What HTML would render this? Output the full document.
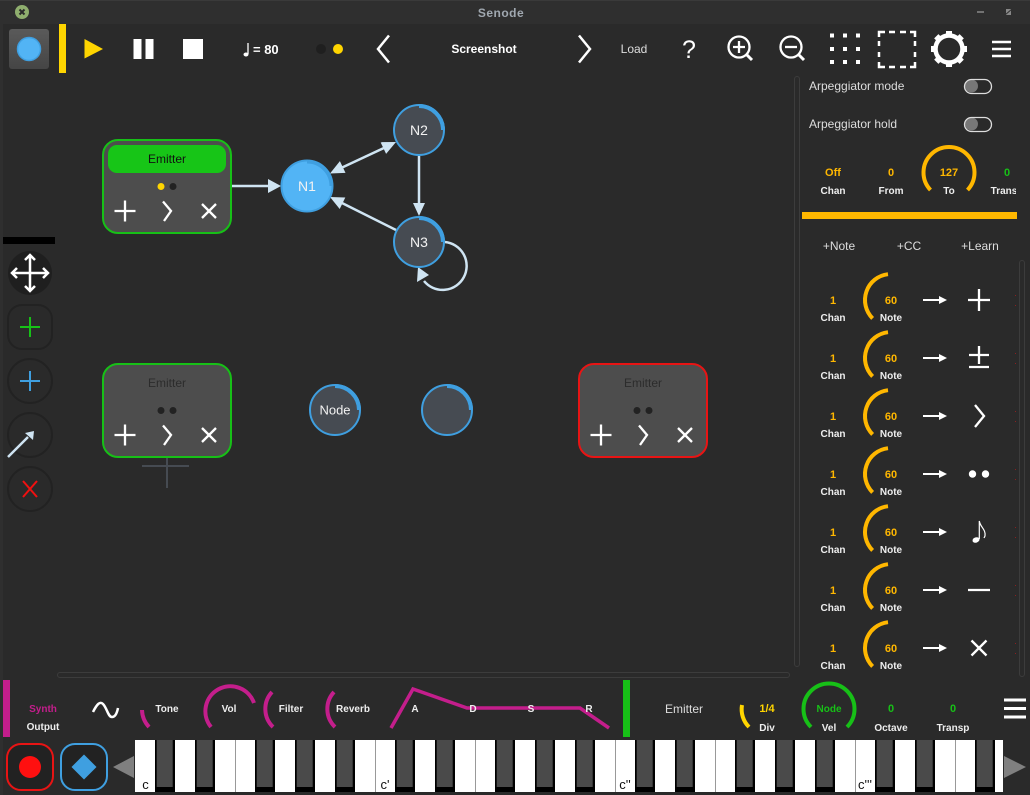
<!DOCTYPE html>
<html><head><meta charset="utf-8"><style>
html,body{margin:0;padding:0;background:#2a2a2a;width:1030px;height:795px;overflow:hidden}
svg{display:block;font-family:"Liberation Sans",sans-serif}
.b{font-weight:bold;font-size:10px;text-anchor:middle;fill:#eee}
.v{font-size:11px}
.y{fill:#ffb700}.g{fill:#17c017}.m{fill:#c41e8c}
.t{font-size:12px;fill:#ddd;text-anchor:middle}
.w{stroke:#fff;stroke-width:2.300;fill:none}
.w2{stroke:#fff;stroke-width:2.500;fill:none}
.e{font-size:12px;text-anchor:middle;fill:#2c2c2c}
.n{font-size:14px;fill:#f2f2f2;text-anchor:middle}
.l{stroke:#cfe4f2;stroke-width:2.500;fill:none}
.h{fill:#cfe4f2}
.ar{stroke:#ffb700;stroke-width:4;fill:none}
.mg{stroke:#c41e8c;stroke-width:4;fill:none}
</style></head><body>
<svg width="1030" height="795" viewBox="0 0 1030 795" xmlns="http://www.w3.org/2000/svg">
<defs>
<linearGradient id="bt" x1="0" y1="0" x2="0" y2="1"><stop offset="0" stop-color="#5a5a5a"/><stop offset="1" stop-color="#454545"/></linearGradient>
<g id="ctl"><path class="w" d="M-10.500 0H10.500M0-10.500V10.500"/><path class="w" d="M38-9.500L46 0L39 10"/><path class="w" d="M77-7L91 7M91-7L77 7"/></g>
<g id="rw"><path class="ar" d="M-3-25.800A26 26 0 0 0-18.400 18.400"/><path stroke="#fff" stroke-width="2" d="M32 0H50"/><path fill="#fff" d="M48-4L56 0L48 4Z"/><rect x="124" y="-5" width="1" height="1" fill="#8c2020"/><rect x="124" y="5" width="1" height="1" fill="#8c2020"/></g>
<g id="bk"><rect width="20" height="52" fill="#000"/><rect x="1.700" width="16" height="47" fill="#4a4a4a"/></g>
<g id="oct"><use href="#bk" x="20"/><use href="#bk" x="60"/><use href="#bk" x="120"/><use href="#bk" x="160"/><use href="#bk" x="200"/><rect x="100" width="1" height="52" fill="#999"/></g>
<g id="gt"><rect x="-3" y="-18" width="6" height="6" fill="#fff"/></g>
</defs>
<rect width="1030" height="795" fill="#2a2a2a"/>
<rect width="1030" height="24" fill="#2f2f2f"/>
<rect width="1030" height="1" fill="#3a3a3a"/>
<rect x="0" y="24" width="3" height="771" fill="#2f2f2f"/>
<circle cx="22" cy="12" r="7" fill="#8fae6e"/><path stroke="#2a2a2a" stroke-width="2" d="M19.500 9.500L24.500 14.500M24.500 9.500L19.500 14.500"/>
<text x="501" y="17" font-size="12" font-weight="bold" fill="#a0a8b0" text-anchor="middle" letter-spacing=".5">Senode</text>
<path stroke="#888" stroke-width="1.500" d="M977 12H984"/><path fill="#888" d="M1006 9L1011 9L1011 15L1006 15Z"/><path stroke="#2f2f2f" d="M1005 15L1012 9"/>

<rect x="9" y="29" width="40" height="40" rx="3" fill="url(#bt)"/>
<circle cx="29" cy="49" r="11.500" fill="#52b4f5" stroke="#3f9fe0" stroke-width="1.500"/>
<rect x="59" y="24" width="7" height="49" fill="#ffd500"/>
<path fill="#ffd500" d="M84.500 39L103 49L84.500 58.500Z"/>
<rect x="133.500" y="39" width="8" height="20" fill="#fff"/><rect x="145.500" y="39" width="8" height="20" fill="#fff"/>
<rect x="183" y="39" width="20" height="20" fill="#fff"/>
<path stroke="#fff" stroke-width="1.300" d="M248 43V54"/><ellipse cx="246" cy="54.500" rx="2.500" ry="2" fill="#fff"/>
<text x="253" y="54" font-size="13" font-weight="bold" fill="#fff">= 80</text>
<circle cx="321" cy="49" r="5" fill="#1f1f1f"/><circle cx="338" cy="49" r="5" fill="#ffd500"/>
<path class="w2" d="M389 35.500L378 49L389 62.500"/>
<text x="484" y="53" font-size="12" font-weight="bold" fill="#fff" text-anchor="middle">Screenshot</text>
<path class="w2" d="M579 35.500L590 49L579 62.500"/>
<text x="634" y="53" class="t">Load</text>
<text x="689" y="58" font-size="25" fill="#fff" text-anchor="middle">?</text>
<circle cx="739" cy="47" r="10.500" class="w"/><path class="w" d="M733 47H745M739 41V53"/><path class="w2" style="stroke-width:3" d="M747 55L752 60"/>
<circle cx="791" cy="47" r="10.500" class="w"/><path class="w" d="M785 47H797"/><path class="w2" style="stroke-width:3" d="M799 55L804 60"/>
<g fill="#fff"><rect x="830" y="33.500" width="4" height="4"/><rect x="843" y="33.500" width="4" height="4"/><rect x="856" y="33.500" width="4" height="4"/><rect x="830" y="47" width="4" height="4"/><rect x="843" y="47" width="4" height="4"/><rect x="856" y="47" width="4" height="4"/><rect x="830" y="60" width="4" height="4"/><rect x="843" y="60" width="4" height="4"/><rect x="856" y="60" width="4" height="4"/></g>
<path class="w2" d="M879 37V32H885M889 32H895M900 32H906M910 32H915V37M915 41V46M915 52V57M915 62V67H910M906 67H900M895 67H889M885 67H879V62M879 57V52M879 46V41"/>
<g transform="translate(949 49)"><circle r="13.500" fill="none" stroke="#fff" stroke-width="4.500"/>
<use href="#gt"/><use href="#gt" transform="rotate(45)"/><use href="#gt" transform="rotate(90)"/><use href="#gt" transform="rotate(135)"/><use href="#gt" transform="rotate(180)"/><use href="#gt" transform="rotate(225)"/><use href="#gt" transform="rotate(270)"/><use href="#gt" transform="rotate(315)"/></g>
<path class="w2" d="M992 42H1011M992 49H1011M992 56H1011"/>

<!-- graph -->
<rect x="103" y="140" width="128" height="93" rx="15" fill="#4d4d4d" stroke="#17c017" stroke-width="2"/>
<rect x="108" y="145" width="118" height="28" rx="9" fill="#17c517"/>
<text x="167" y="163" class="e" style="fill:#111">Emitter</text>
<circle cx="161" cy="186.500" r="3.500" fill="#ffd500"/><circle cx="173" cy="186.500" r="3.500" fill="#222"/>
<use href="#ctl" x="125" y="211"/>

<path class="l" d="M232 186H270"/><path class="h" d="M268 179L281 186L268 193Z"/>
<path class="l" d="M340 168.500L386 147"/><path class="h" d="M330 173.500L345.500 172.900L339.900 161.100Z"/><path class="h" d="M396 142L380.500 142.100L386.100 153.900Z"/>
<path class="l" d="M419 156V205"/><path class="h" d="M413 203H425L419 216Z"/>
<path class="l" d="M396 230L340 202"/><path class="h" d="M330 197L345.300 197.500L339.700 209Z"/>
<path class="l" d="M445 242A24 24 0 1 1 424 281"/><path class="h" d="M418 267L429 275L417 282Z"/>

<circle cx="307" cy="186" r="25.500" fill="#52b4f5" stroke="#3f9fe0" stroke-width="2"/>
<path d="M307 162A24 24 0 0 1 331 186" stroke="#3f9fe0" stroke-width="3" fill="none"/>
<text x="307" y="191" class="n">N1</text>
<circle cx="419" cy="130" r="25" fill="#464b52" stroke="#3f9fe0" stroke-width="2"/>
<path d="M419 106A24 24 0 0 1 443 130" stroke="#3f9fe0" stroke-width="4" fill="none"/>
<text x="419" y="135" class="n">N2</text>
<circle cx="419" cy="242" r="25" fill="#464b52" stroke="#3f9fe0" stroke-width="2"/>
<path d="M419 218A24 24 0 0 1 443 242" stroke="#3f9fe0" stroke-width="4" fill="none"/>
<text x="419" y="247" class="n">N3</text>

<!-- left tools -->
<rect x="3" y="237" width="52" height="7" fill="#000"/>
<circle cx="30" cy="273" r="22" fill="#1f1f1f"/>
<path class="w2" d="M30 255V291M12 273H48M25 260L30 255L35 260M25 286L30 291L35 286M17 268L12 273L17 278M43 268L48 273L43 278"/>
<rect x="8" y="305" width="44" height="44" rx="14" fill="none" stroke="#222" stroke-width="2"/>
<path stroke="#17c017" stroke-width="2" d="M20 327H40M30 317V337"/>
<circle cx="30" cy="381" r="22" fill="none" stroke="#222" stroke-width="2"/>
<path stroke="#3f9fe0" stroke-width="2" d="M20 381H40M30 371V391"/>
<circle cx="30" cy="435" r="22" fill="none" stroke="#222" stroke-width="2"/>
<path class="l" d="M8 457L28 437"/><path class="h" d="M34 431L25 433L33 440Z"/>
<circle cx="30" cy="489" r="22" fill="none" stroke="#222" stroke-width="2"/>
<path stroke="#f01010" stroke-width="2" d="M23 481L37 497M37 481L23 497"/>

<rect x="103" y="364" width="128" height="93" rx="15" fill="#4d4d4d" stroke="#17c017" stroke-width="2"/>
<text x="167" y="387" class="e">Emitter</text>
<circle cx="161" cy="410.500" r="3.500" fill="#222"/><circle cx="173" cy="410.500" r="3.500" fill="#222"/>
<use href="#ctl" x="125" y="435"/>
<path stroke="#464b52" stroke-width="2" d="M142 466H189M167 458V488"/>

<circle cx="335" cy="410" r="25" fill="#464b52" stroke="#3f9fe0" stroke-width="2"/>
<path d="M335 386A24 24 0 0 1 359 410" stroke="#3f9fe0" stroke-width="4" fill="none"/>
<text x="335" y="414.500" class="n" style="font-size:13px">Node</text>
<circle cx="447" cy="410" r="25" fill="#464b52" stroke="#3f9fe0" stroke-width="2"/>
<path d="M447 386A24 24 0 0 1 471 410" stroke="#3f9fe0" stroke-width="4" fill="none"/>

<rect x="579" y="364" width="128" height="93" rx="15" fill="#4d4d4d" stroke="#e81414" stroke-width="2"/>
<text x="643" y="387" class="e">Emitter</text>
<circle cx="637" cy="410.500" r="3.500" fill="#222"/><circle cx="649" cy="410.500" r="3.500" fill="#222"/>
<use href="#ctl" x="601" y="435"/>

<!-- scrollbars -->
<rect x="794.500" y="76.500" width="5" height="590" rx="2.500" fill="none" stroke="#3c3c3c"/>
<rect x="1019.500" y="260.500" width="5" height="416" rx="2.500" fill="none" stroke="#3c3c3c"/>
<rect x="57.500" y="672.500" width="732" height="5" rx="2.500" fill="none" stroke="#3c3c3c"/>

<!-- right panel -->
<text x="809" y="90" font-size="12" fill="#ddd">Arpeggiator mode</text>
<circle cx="971.500" cy="86" r="6.500" fill="#777"/><rect x="964.500" y="79.500" width="27" height="14" rx="7" fill="none" stroke="#ddd" stroke-width="1.300"/>
<text x="809" y="128" font-size="12" fill="#ddd">Arpeggiator hold</text>
<circle cx="971.500" cy="124" r="6.500" fill="#777"/><rect x="964.500" y="117.500" width="27" height="14" rx="7" fill="none" stroke="#ddd" stroke-width="1.300"/>

<text x="833" y="176" class="b v y">Off</text><text x="833" y="194" class="b">Chan</text>
<text x="891" y="176" class="b v y">0</text><text x="891" y="194" class="b">From</text>
<path class="ar" d="M930.500 190A25.500 25.500 0 1 1 967.500 190"/>
<text x="949" y="176" class="b v y">127</text><text x="949" y="194" class="b">To</text>
<text x="1007" y="176" class="b v g">0</text>
<svg x="985" y="180" width="31" height="20"><text x="19" y="14" class="b">Trans</text></svg>
<rect x="802" y="212" width="215" height="7" fill="#ffb700"/>
<text x="839" y="250" class="t">+Note</text><text x="909" y="250" class="t">+CC</text><text x="980" y="250" class="t">+Learn</text>

<use href="#rw" x="891" y="300"/><text x="833" y="304" class="b v y">1</text><text x="833" y="321" class="b">Chan</text><text x="891" y="304" class="b v y">60</text><text x="891" y="321" class="b">Note</text>
<path class="w" d="M968 300H990M979 289V311"/>
<use href="#rw" x="891" y="358"/><text x="833" y="362" class="b v y">1</text><text x="833" y="379" class="b">Chan</text><text x="891" y="362" class="b v y">60</text><text x="891" y="379" class="b">Note</text>
<path class="w" d="M969 355H989M979 346V364M969 367H989"/>
<use href="#rw" x="891" y="416"/><text x="833" y="420" class="b v y">1</text><text x="833" y="437" class="b">Chan</text><text x="891" y="420" class="b v y">60</text><text x="891" y="437" class="b">Note</text>
<path class="w" d="M975 405L984 416L975 427"/>
<use href="#rw" x="891" y="474"/><text x="833" y="478" class="b v y">1</text><text x="833" y="495" class="b">Chan</text><text x="891" y="478" class="b v y">60</text><text x="891" y="495" class="b">Note</text>
<circle cx="972.500" cy="474" r="3.700" fill="#fff"/><circle cx="985.500" cy="474" r="3.700" fill="#fff"/>
<use href="#rw" x="891" y="532"/><text x="833" y="536" class="b v y">1</text><text x="833" y="553" class="b">Chan</text><text x="891" y="536" class="b v y">60</text><text x="891" y="553" class="b">Note</text>
<ellipse cx="976" cy="540" rx="3.600" ry="2.600" fill="#fff" transform="rotate(-20 976 540)"/><path stroke="#fff" stroke-width="1.200" fill="none" d="M979.300 539V521C980 527 986 529 985 536L984 538"/>
<use href="#rw" x="891" y="590"/><text x="833" y="594" class="b v y">1</text><text x="833" y="611" class="b">Chan</text><text x="891" y="594" class="b v y">60</text><text x="891" y="611" class="b">Note</text>
<path class="w" d="M968 590H990"/>
<use href="#rw" x="891" y="648"/><text x="833" y="652" class="b v y">1</text><text x="833" y="669" class="b">Chan</text><text x="891" y="652" class="b v y">60</text><text x="891" y="669" class="b">Note</text>
<path class="w" d="M971.500 640.500L986.500 655.500M986.500 640.500L971.500 655.500"/>

<!-- bottom -->
<rect x="3" y="680" width="7" height="57" fill="#c41e8c"/>
<text x="43" y="712" class="b m">Synth</text><text x="43" y="730" class="b">Output</text>
<path class="w2" d="M93 712C97 704 100 701 103 704C107 708 108 717 112 717C115 717 117 713 118 708"/>
<path class="mg" d="M142 710A26 26 0 0 0 149 727"/><text x="167" y="712" class="b">Tone</text>
<path class="mg" d="M211 727A25 25 0 1 1 254 703"/><text x="229" y="712" class="b">Vol</text>
<path class="mg" d="M272 692A25 25 0 0 0 273 727"/><text x="291" y="712" class="b">Filter</text>
<path class="mg" d="M334 692A25 25 0 0 0 335 727"/><text x="353" y="712" class="b">Reverb</text>
<path stroke="#c41e8c" stroke-width="3.500" fill="none" d="M391 728L413 689L467 708H580L609 728"/>
<text x="415" y="712" class="b">A</text><text x="473" y="712" class="b">D</text><text x="531" y="712" class="b">S</text><text x="589" y="712" class="b">R</text>
<rect x="623" y="680" width="7" height="57" fill="#17c017"/>
<text x="684" y="713" class="t">Emitter</text>
<path stroke="#ffd500" stroke-width="4" fill="none" d="M742 705A25 25 0 0 0 749 727"/>
<text x="767" y="712" class="b v" style="fill:#ffd500">1/4</text><text x="767" y="731" class="b">Div</text>
<path stroke="#17c017" stroke-width="4" fill="none" d="M811 727A25.500 25.500 0 1 1 847 727"/>
<text x="829" y="712" class="b g">Node</text><text x="829" y="731" class="b">Vel</text>
<text x="891" y="712" class="b v g">0</text><text x="891" y="731" class="b">Octave</text>
<text x="953" y="712" class="b v g">0</text><text x="953" y="731" class="b">Transp</text>
<path stroke="#fff" stroke-width="3" d="M1004 700H1026M1004 708.500H1026M1004 717H1026"/>

<rect x="7" y="744" width="46" height="46" rx="14" fill="#222" stroke="#e81414" stroke-width="2"/>
<circle cx="30" cy="767" r="11" fill="#ff1010"/>
<rect x="61" y="744" width="46" height="46" rx="14" fill="#222" stroke="#3f9fe0" stroke-width="2"/>
<path fill="#3f9fe0" d="M84 754.500L96.500 767L84 779.500L71.500 767Z"/>
<path fill="#808080" d="M113 767L134 756V778Z"/>
<path fill="#808080" d="M1004 756L1026 767L1004 778Z"/>

<rect x="135" y="740" width="868" height="52" fill="#fff"/>
<g transform="translate(135 740)"><use href="#oct"/><use href="#oct" x="240"/><use href="#oct" x="480"/></g>
<g transform="translate(855 740)"><use href="#bk" x="20"/><use href="#bk" x="60"/><use href="#bk" x="120"/><rect x="100" width="1" height="52" fill="#999"/></g>
<rect x="375" y="740" width="1" height="52" fill="#999"/><rect x="615" y="740" width="1" height="52" fill="#999"/><rect x="855" y="740" width="1" height="52" fill="#999"/>
<text x="145.500" y="789" font-size="13" fill="#111" text-anchor="middle">c</text>
<text x="385" y="789" font-size="13" fill="#111" text-anchor="middle">c'</text>
<text x="625" y="789" font-size="13" fill="#111" text-anchor="middle">c''</text>
<text x="865" y="789" font-size="13" fill="#111" text-anchor="middle">c'''</text>
</svg>
</body></html>
